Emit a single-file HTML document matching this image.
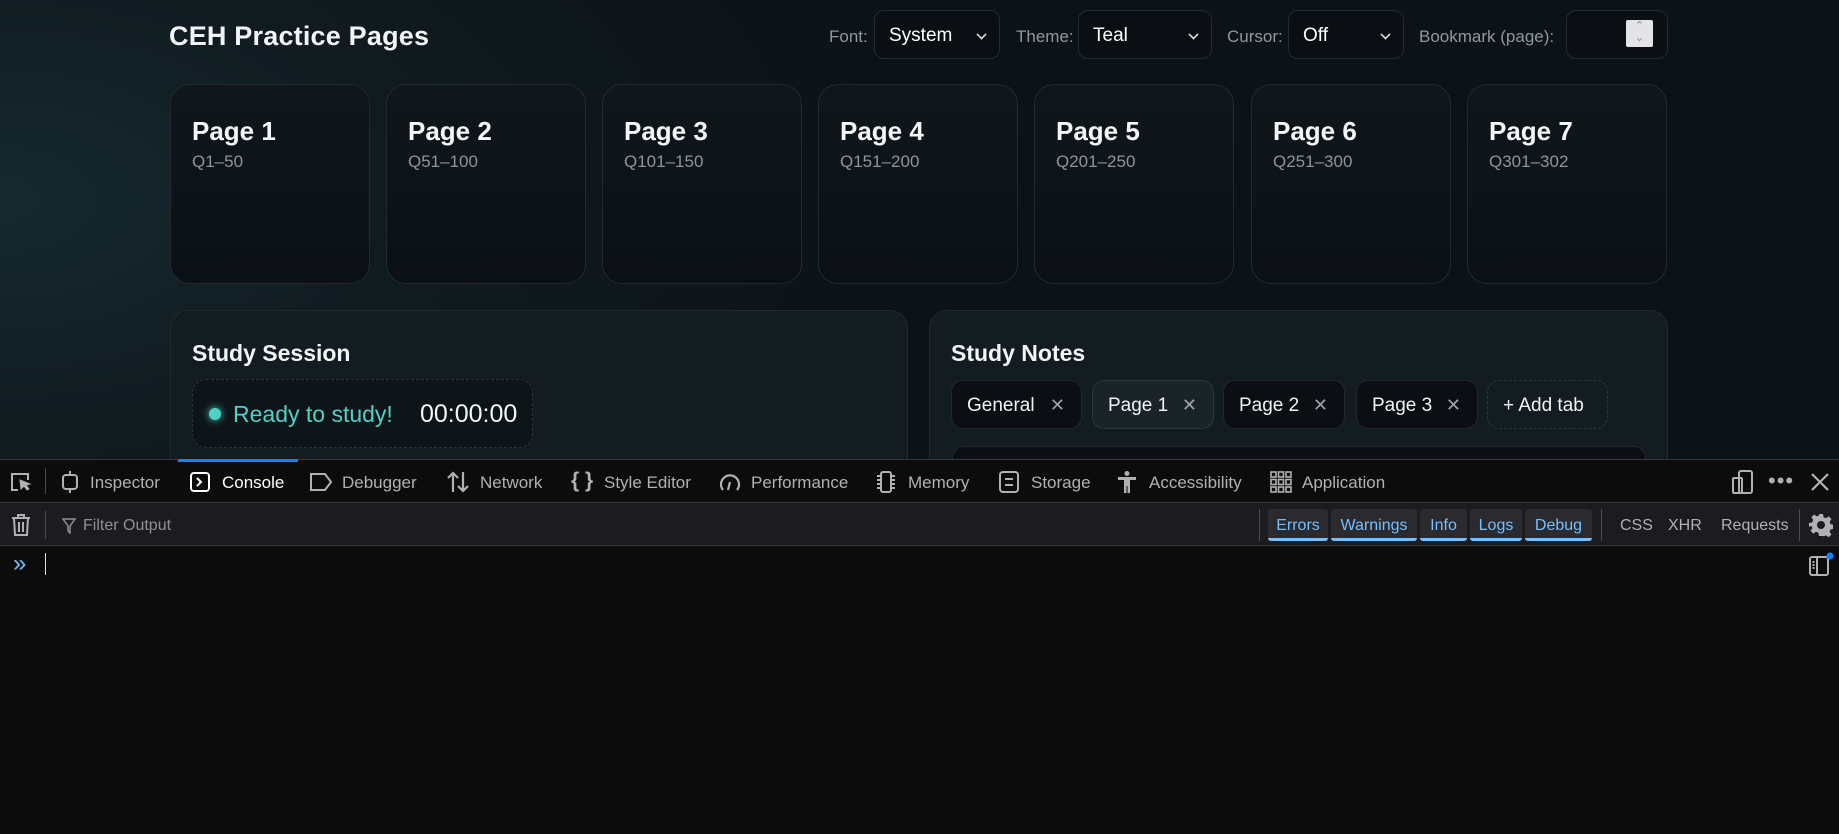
<!DOCTYPE html>
<html><head><meta charset="utf-8"><style>
*{box-sizing:border-box;margin:0;padding:0}
body{width:1839px;height:834px;overflow:hidden;font-family:"Liberation Sans",sans-serif;background:#0c0c0d;position:relative}
#page{position:absolute;left:0;top:0;width:1839px;height:459px;overflow:hidden;background:radial-gradient(ellipse 900px 500px at 0px 200px,#162a30 0%,#101b20 45%,#0c1317 100%)}
.abs{position:absolute}
h1{position:absolute;left:169px;top:21px;font-size:27px;font-weight:bold;color:#f2f5f7;letter-spacing:0.2px}
.lbl{position:absolute;top:27px;font-size:17px;color:#8c98a0}
.sel{position:absolute;top:10px;height:49px;border:1px solid #222c33;border-radius:10px;background:#0b0f13;color:#fff;font-size:19px;padding:14px 0 0 14px}
.sel .ch{position:absolute;right:13px;top:19px;width:9px;height:9px;border-right:2px solid #ddd;border-bottom:2px solid #ddd;transform:rotate(45deg) scale(0.8)}
.card{position:absolute;top:84px;width:200px;height:200px;border:1px solid #1f2a31;border-radius:20px;background:linear-gradient(#10171c,#0b1014)}
.card b{position:absolute;left:21px;top:31px;font-size:26px;color:#f4f6f8}
.card span{position:absolute;left:21px;top:67px;font-size:17px;color:#8a959c}
.panel{position:absolute;top:310px;height:180px;border:1px solid #1f2a31;border-radius:18px;background:#131c21}
.panel h2{position:absolute;left:21px;top:29px;font-size:23px;color:#f2f5f7}
.tab{position:absolute;top:69px;height:49px;border:1px solid #1f2830;border-radius:12px;background:#0b0f13;color:#f0f2f4;font-size:19px;padding:14px 0 0 15px}
.tab i{font-style:normal;color:#9aa4aa;position:absolute;right:16px;top:14px;font-size:18px}
#dt1{position:absolute;left:0;top:459px;width:1839px;height:44px;background:#0c0c0d;border-top:1px solid #38383d;border-bottom:1px solid #38383d}
.t{position:absolute;top:13px;font-size:17px;color:#b1b1b3}
#dt2{position:absolute;left:0;top:503px;width:1839px;height:43px;background:#1c1b20;border-bottom:1px solid #38383d}
.chip{position:absolute;top:6px;height:32px;background:#2a2a2f;border-radius:3px;border-bottom:3px solid #75bfff;color:#75bfff;font-size:16px;text-align:center;padding-top:8px}
.g{position:absolute;top:14px;font-size:16px;color:#b1b1b3}
.sep{position:absolute;width:1px;background:#4a4a4f}
svg{position:absolute}
</style></head><body>
<div id="page">
<h1>CEH Practice Pages</h1>
<div class="lbl" style="left:829px">Font:</div>
<div class="sel" style="left:874px;width:126px">System<span class="ch"></span></div>
<div class="lbl" style="left:1016px">Theme:</div>
<div class="sel" style="left:1078px;width:134px">Teal<span class="ch"></span></div>
<div class="lbl" style="left:1227px">Cursor:</div>
<div class="sel" style="left:1288px;width:116px">Off<span class="ch"></span></div>
<div class="lbl" style="left:1419px">Bookmark (page):</div>
<div class="sel" style="left:1566px;width:102px"><div class="abs" style="left:59px;top:9px;width:27px;height:27px;background:#e4e4e8;border-radius:2px;color:#888;font-size:11px;text-align:center;line-height:12px">&#8963;<br>&#8964;</div></div>

<div class="card" style="left:170px"><b>Page 1</b><span>Q1–50</span></div>
<div class="card" style="left:386px"><b>Page 2</b><span>Q51–100</span></div>
<div class="card" style="left:602px"><b>Page 3</b><span>Q101–150</span></div>
<div class="card" style="left:818px"><b>Page 4</b><span>Q151–200</span></div>
<div class="card" style="left:1034px"><b>Page 5</b><span>Q201–250</span></div>
<div class="card" style="left:1251px"><b>Page 6</b><span>Q251–300</span></div>
<div class="card" style="left:1467px"><b>Page 7</b><span>Q301–302</span></div>

<div class="panel" style="left:170px;width:738px"><h2>Study Session</h2>
<div class="abs" style="left:21px;top:68px;width:341px;height:69px;border:1px dashed #27343b;border-radius:14px;background:#0e1519">
<div class="abs" style="left:16px;top:28px;width:12px;height:12px;border-radius:50%;background:#4fd1c5;box-shadow:0 0 8px #4fd1c5"></div>
<div class="abs" style="left:40px;top:21px;font-size:23px;color:#4fd1c5">Ready to study!</div>
<div class="abs" style="left:227px;top:20px;font-size:25px;color:#f4f6f8">00:00:00</div>
</div></div>
<div class="panel" style="left:929px;width:739px"><h2>Study Notes</h2>
<div class="tab" style="left:21px;width:131px">General<i>✕</i></div>
<div class="tab" style="left:162px;width:122px;background:#1a2328;border-color:#2b363d">Page 1<i>✕</i></div>
<div class="tab" style="left:293px;width:122px">Page 2<i>✕</i></div>
<div class="tab" style="left:426px;width:122px">Page 3<i>✕</i></div>
<div class="tab" style="left:557px;width:121px;border:1px dashed #2b363d;background:transparent">+ Add tab</div>
<div class="abs" style="left:22px;top:135px;width:694px;height:60px;border:1px solid #1f2830;border-radius:12px;background:#0b0f13"></div>
</div>
</div>

<div id="dt1">
<svg style="left:9px;top:11px" width="24" height="22" viewBox="0 0 24 22" fill="none" stroke="#b1b1b3" stroke-width="2"><path d="M9 19H3V3h16v6"/><path d="M11 9l10 4-4 1 3 4-2 1-3-4-3 3z" fill="#b1b1b3" stroke-width="1"/></svg>
<div class="sep" style="left:45px;top:8px;height:26px"></div>
<svg style="left:59px;top:11px" width="22" height="22" viewBox="0 0 22 22" fill="none" stroke="#b1b1b3" stroke-width="2"><rect x="4" y="4" width="14" height="14" rx="3"/><path d="M11 0v4M11 18v4"/></svg>
<div class="t" style="left:90px">Inspector</div>
<div class="abs" style="left:178px;top:-1px;width:120px;height:3px;background:#0a84ff"></div>
<svg style="left:189px;top:11px" width="22" height="22" viewBox="0 0 22 22" fill="none" stroke="#fff" stroke-width="2"><rect x="2" y="2" width="18" height="18" rx="3"/><path d="M8 7l4 4-4 4"/></svg>
<div class="t" style="left:222px;color:#fff">Console</div>
<svg style="left:309px;top:12px" width="24" height="20" viewBox="0 0 24 20" fill="none" stroke="#b1b1b3" stroke-width="2"><path d="M2 2h14l6 8-6 8H2z"/></svg>
<div class="t" style="left:342px">Debugger</div>
<svg style="left:446px;top:10px" width="24" height="24" viewBox="0 0 24 24" fill="none" stroke="#b1b1b3" stroke-width="2.2"><path d="M7 22V3M2 8l5-5 5 5M17 2v19M12 16l5 5 5-5"/></svg>
<div class="t" style="left:480px">Network</div>
<div class="t" style="left:571px;top:9px;font-size:21px;font-weight:bold">{ }</div>
<div class="t" style="left:604px">Style Editor</div>
<svg style="left:718px;top:11px" width="24" height="22" viewBox="0 0 24 22" fill="none" stroke="#b1b1b3" stroke-width="2.2"><path d="M5 19A9 9 0 1 1 19 19"/><path d="M12 11l-2 8"/></svg>
<div class="t" style="left:751px">Performance</div>
<svg style="left:875px;top:10px" width="22" height="24" viewBox="0 0 22 24" fill="none" stroke="#b1b1b3" stroke-width="2"><rect x="6" y="2" width="10" height="20" rx="2"/><path d="M2 6h4M2 10h4M2 14h4M2 18h4M16 6h4M16 10h4M16 14h4M16 18h4"/></svg>
<div class="t" style="left:908px">Memory</div>
<svg style="left:998px;top:10px" width="22" height="24" viewBox="0 0 22 24" fill="none" stroke="#b1b1b3" stroke-width="2"><rect x="2" y="2" width="18" height="20" rx="3"/><path d="M7 9h8M7 15h8"/></svg>
<div class="t" style="left:1031px">Storage</div>
<svg style="left:1116px;top:10px" width="22" height="24" viewBox="0 0 22 24" fill="#b1b1b3"><circle cx="11" cy="3.5" r="2.5"/><path d="M2 7h18v3h-6v13h-2.5v-7h-1v7H8V10H2z"/></svg>
<div class="t" style="left:1149px">Accessibility</div>
<svg style="left:1270px;top:11px" width="22" height="22" viewBox="0 0 22 22" fill="none" stroke="#b1b1b3" stroke-width="1.6"><rect x="1" y="1" width="5" height="5"/><rect x="8.5" y="1" width="5" height="5"/><rect x="16" y="1" width="5" height="5"/><rect x="1" y="8.5" width="5" height="5"/><rect x="8.5" y="8.5" width="5" height="5"/><rect x="16" y="8.5" width="5" height="5"/><rect x="1" y="16" width="5" height="5"/><rect x="8.5" y="16" width="5" height="5"/><rect x="16" y="16" width="5" height="5"/></svg>
<div class="t" style="left:1302px">Application</div>
<svg style="left:1731px;top:9px" width="24" height="26" viewBox="0 0 24 26" fill="none" stroke="#b1b1b3" stroke-width="2"><rect x="8" y="2" width="13" height="22" rx="2"/><rect x="2" y="9" width="9" height="15" rx="1"/></svg>
<div class="t" style="left:1768px;top:8px;font-size:22px;letter-spacing:1px">•••</div>
<svg style="left:1810px;top:12px" width="20" height="20" viewBox="0 0 20 20" stroke="#b1b1b3" stroke-width="2.2"><path d="M2 2l16 16M18 2L2 18"/></svg>
</div>

<div id="dt2">
<svg style="left:11px;top:10px" width="20" height="24" viewBox="0 0 20 24" fill="none" stroke="#b1b1b3" stroke-width="2"><path d="M1 5h18M7 5V2h6v3"/><path d="M3 5l1 17h12l1-17"/><path d="M8 9v10M12 9v10"/></svg>
<div class="sep" style="left:45px;top:8px;height:28px"></div>
<svg style="left:62px;top:15px" width="14" height="16" viewBox="0 0 14 16" fill="none" stroke="#8f8f94" stroke-width="1.5"><path d="M1 1h12L8 8v7l-2-2V8z"/></svg>
<div class="g" style="left:83px;color:#8f8f94">Filter Output</div>
<div class="sep" style="left:1259px;top:6px;height:32px"></div>
<div class="chip" style="left:1268px;width:60px">Errors</div>
<div class="chip" style="left:1331px;width:86px">Warnings</div>
<div class="chip" style="left:1420px;width:47px">Info</div>
<div class="chip" style="left:1470px;width:52px">Logs</div>
<div class="chip" style="left:1525px;width:67px">Debug</div>
<div class="sep" style="left:1601px;top:6px;height:32px"></div>
<div class="g" style="left:1620px">CSS</div>
<div class="g" style="left:1668px">XHR</div>
<div class="g" style="left:1721px">Requests</div>
<div class="sep" style="left:1799px;top:6px;height:32px"></div>
<svg style="left:1809px;top:10px" width="24" height="24" viewBox="0 0 24 24" fill="#b1b1b3"><path d="M10 1h4l.6 3.2 2.4 1 2.7-1.9 2.8 2.8-1.9 2.7 1 2.4 3.2.6v4l-3.2.6-1 2.4 1.9 2.7-2.8 2.8-2.7-1.9-2.4 1L14 23h-4l-.6-3.2-2.4-1-2.7 1.9-2.8-2.8 1.9-2.7-1-2.4L0 14v-4l3.2-.6 1-2.4-1.9-2.7 2.8-2.8 2.7 1.9 2.4-1z"/><circle cx="12" cy="12" r="4" fill="#1c1b20"/></svg>
</div>

<div class="abs" style="left:13px;top:550px;font-size:24px;color:#75bfff">»</div>
<div class="abs" style="left:45px;top:553px;width:1px;height:22px;background:#ddd"></div>
<svg style="left:1808px;top:552px" width="26" height="26" viewBox="0 0 26 26" fill="none" stroke="#b1b1b3" stroke-width="2"><rect x="2" y="5" width="18" height="18" rx="2"/><path d="M9 5v18M4.5 10h2M4.5 13h2M4.5 16h2"/><circle cx="22" cy="4" r="3.5" fill="#0a84ff" stroke="none"/></svg>
</body></html>
